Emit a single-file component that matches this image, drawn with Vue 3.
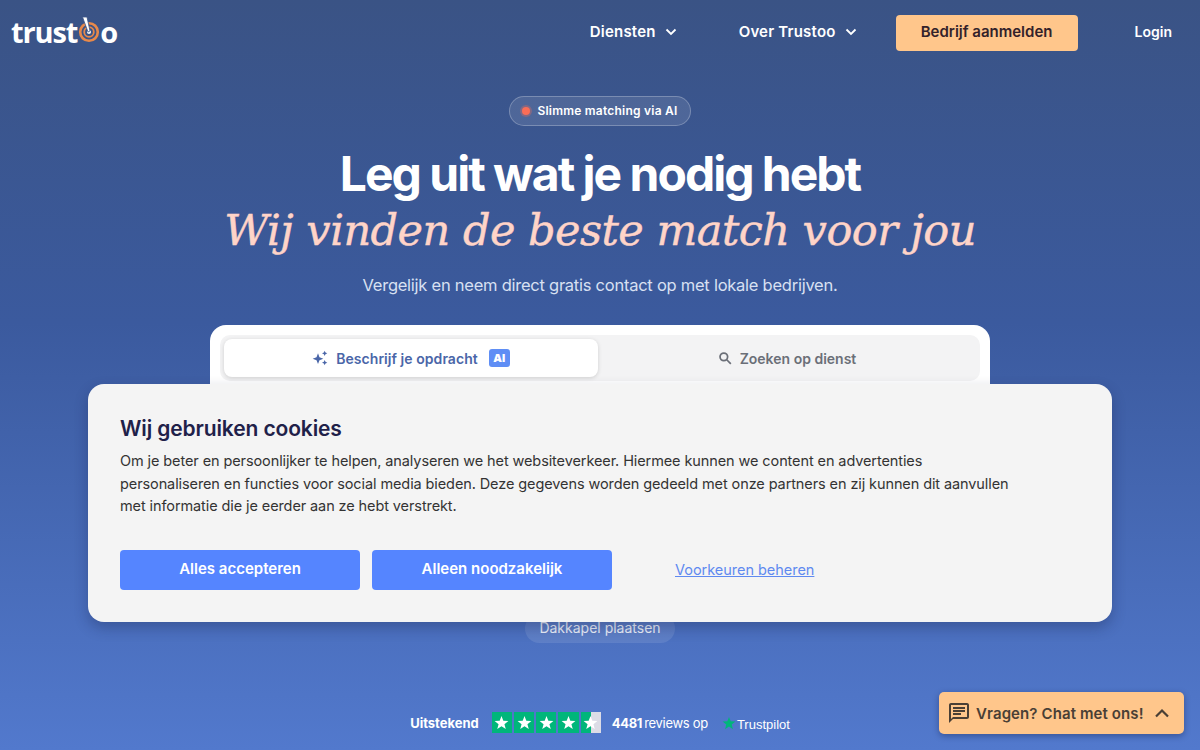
<script setup>
const stars = [1, 2, 3, 4, 5]
</script>

<template>
  <div class="page">
    <header class="nav">
      <div class="logo">
        <span>trust</span>
        <svg class="target" width="24" height="28" viewBox="0 0 24 28">
          <circle cx="12" cy="16" r="8.800" fill="none" stroke="#e8894a" stroke-width="2.600" />
          <circle cx="12" cy="16" r="4.800" fill="none" stroke="#e8894a" stroke-width="1.800" />
          <circle cx="12" cy="16" r="2" fill="#f4f4f4" />
          <path d="M5.500 1 L10 1 L13 15 L11 16 Z" fill="#fff" stroke="#3a5385" stroke-width="0.800" />
        </svg>
        <span>o</span>
      </div>
      <nav class="menu">
        <a class="item first">Diensten
          <svg width="12" height="8" viewBox="0 0 12 8"><path d="M1.500 1.500 6 6l4.500-4.500" fill="none" stroke="#fff" stroke-width="1.800" /></svg>
        </a>
        <a class="item second">Over Trustoo
          <svg width="12" height="8" viewBox="0 0 12 8"><path d="M1.500 1.500 6 6l4.500-4.500" fill="none" stroke="#fff" stroke-width="1.800" /></svg>
        </a>
        <a class="cta">Bedrijf aanmelden</a>
        <a class="login">Login</a>
      </nav>
    </header>

    <main class="hero">
      <div class="badge"><i class="dot"></i>Slimme matching via AI</div>
      <h1>Leg uit wat je nodig hebt</h1>
      <h2>Wij vinden de beste match voor jou</h2>
      <p class="sub">Vergelijk en neem direct gratis contact op met lokale bedrijven.</p>

      <section class="card">
        <div class="tabs">
          <div class="tab active">
            <svg width="16" height="16" viewBox="0 0 24 24" fill="#4a66a8">
              <path d="M9 5l2.200 5.800L17 13l-5.800 2.200L9 21l-2.200-5.800L1 13l5.800-2.200z" />
              <path d="M19 1l1.200 2.800L23 5l-2.800 1.200L19 9l-1.200-2.800L15 5l2.800-1.200zM19 15l1.200 2.800L23 19l-2.800 1.200L19 23l-1.200-2.800L15 19l2.800-1.200z" />
            </svg>
            <span>Beschrijf je opdracht</span>
            <b class="ai">AI</b>
          </div>
          <div class="tab">
            <svg width="14" height="14" viewBox="0 0 24 24" fill="none" stroke="#6b6f78" stroke-width="3">
              <circle cx="10" cy="10" r="6.500" /><path d="M15 15l7 7" />
            </svg>
            <span>Zoeken op dienst</span>
          </div>
        </div>
        <div class="card-body"></div>
      </section>

      <div class="chip">Dakkapel plaatsen</div>

      <div class="trust">
        <b class="lbl">Uitstekend</b>
        <div class="stars">
          <span v-for="s in stars" :key="s" class="star" :class="{ half: s === 5 }">
            <svg width="15" height="15" viewBox="0 0 24 24"><path d="M12 1.500l2.900 7.600 8.100.4-6.300 5.100 2.100 7.900L12 18.100l-6.800 4.400 2.100-7.900L1 9.500l8.100-.4z" fill="#fff" /></svg>
          </span>
        </div>
        <span class="count"><b>4481</b>reviews op</span>
        <span class="pilot">
          <svg width="14" height="14" viewBox="0 0 24 24"><path d="M12 1.500l2.900 7.600 8.100.4-6.300 5.100 2.100 7.900L12 18.100l-6.800 4.400 2.100-7.900L1 9.500l8.100-.4z" fill="#00b67a" /></svg>
          <span class="pilot-name">Trustpilot</span>
        </span>
      </div>
    </main>

    <aside class="cookie">
      <h3>Wij gebruiken cookies</h3>
      <p>Om je beter en persoonlijker te helpen, analyseren we het websiteverkeer. Hiermee kunnen we content en advertenties personaliseren en functies voor social media bieden. Deze gegevens worden gedeeld met onze partners en zij kunnen dit aanvullen met informatie die je eerder aan ze hebt verstrekt.</p>
      <div class="actions">
        <button class="btn">Alles accepteren</button>
        <button class="btn">Alleen noodzakelijk</button>
        <a class="pref">Voorkeuren beheren</a>
      </div>
    </aside>

    <aside class="chat">
      <svg width="24" height="24" viewBox="0 0 24 24" fill="#4a3f35">
        <path d="M20 2H4c-1.100 0-2 .9-2 2v18l4-4h14c1.100 0 2-.9 2-2V4c0-1.100-.9-2-2-2zm0 14H6l-2 2V4h16v12zM6 12h8v2H6zm0-3h12v2H6zm0-3h12v2H6z" />
      </svg>
      <span>Vragen? Chat met ons!</span>
      <svg class="up" width="16" height="10" viewBox="0 0 16 10"><path d="M2 8.500l6-6 6 6" fill="none" stroke="#4a3f35" stroke-width="2.200" /></svg>
    </aside>
  </div>
</template>

<style>
html, body { margin: 0; overflow: hidden; }
</style>

<style scoped>
.page {
  width: 1200px;
  height: 750px;
  overflow: hidden;
  position: relative;
  font-family: Inter, "Liberation Sans", sans-serif;
  color: #fff;
  background: linear-gradient(180deg, #3a5385 0%, #3b5a9e 43%, #5279cd 100%);
}
.nav {
  height: 65px;
  display: flex;
  align-items: center;
  justify-content: space-between;
  padding: 0 28px 0 11px;
}
.logo {
  display: flex;
  align-items: flex-end;
  margin-top: -2px;
  font-family: "Open Sans", sans-serif;
  font-weight: 700;
  font-size: 29px;
  line-height: 30px;
  letter-spacing: -1.100px;
}
.target { margin: 0 -1px 3px 0; }
.menu { display: flex; align-items: center; }
.item {
  display: flex;
  align-items: center;
  gap: 9px;
  padding-bottom: 2px;
  font-size: 15px;
  font-weight: 600;
  letter-spacing: 0.200px;
}
.item.first { margin-right: 62px; }
.item.second { margin-right: 39px; }
.cta {
  width: 182px;
  height: 36px;
  box-sizing: border-box;
  padding-bottom: 2px;
  display: flex;
  align-items: center;
  justify-content: center;
  background: #ffc68b;
  color: #33222a;
  border-radius: 4px;
  font-size: 15px;
  font-weight: 600;
  margin-right: 57px;
}
.login { font-size: 14px; font-weight: 600; padding-bottom: 2px; }
.hero {
  display: flex;
  flex-direction: column;
  align-items: center;
  padding-top: 31px;
}
.badge {
  padding: 0 12px 2px 11px;
  height: 26px;
  display: flex;
  align-items: center;
  gap: 7px;
  border: 1px solid rgba(255, 255, 255, 0.25);
  background: rgba(255, 255, 255, 0.1);
  border-radius: 15px;
  font-size: 12px;
  font-weight: 600;
  letter-spacing: 0.230px;
}
.dot {
  width: 8px;
  height: 8px;
  margin: 2px 0 0 1px;
  border-radius: 50%;
  background: #fa6d57;
  box-shadow: 0 0 0 2px rgba(250, 109, 87, 0.3);
}
h1 {
  margin: 18px 0 0;
  font-size: 48px;
  line-height: 60px;
  font-weight: 700;
  letter-spacing: -2px;
}
h2 {
  margin: -4px 0 0;
  font-family: "DejaVu Serif", serif;
  font-style: italic;
  font-weight: 400;
  font-size: 43px;
  line-height: 60px;
  letter-spacing: -0.500px;
  -webkit-text-stroke: 0.500px #ffd4c8;
  color: #ffd4c8;
}
.sub {
  margin: 12px 0 0;
  font-size: 16.500px;
  line-height: 26px;
  color: #d8e0f2;
  letter-spacing: -0.250px;
}
.card {
  margin-top: 27px;
  width: 780px;
  height: 280px;
  box-sizing: border-box;
  padding: 10px;
  background: #fff;
  border-radius: 16px;
}
.tabs {
  display: grid;
  grid-template-columns: 374px 1fr;
  height: 46px;
  padding: 4px;
  box-sizing: border-box;
  background: #f3f3f4;
  border-radius: 10px;
}
.tab {
  display: flex;
  align-items: center;
  justify-content: center;
  gap: 8px;
  font-size: 14px;
  font-weight: 600;
  color: #6b6f78;
  border-radius: 8px;
}
.tab.active {
  background: #fff;
  color: #4a66a8;
  letter-spacing: 0.050px;
  box-shadow: 0 1px 4px rgba(0, 0, 0, 0.15);
}
.ai {
  width: 21px;
  height: 18px;
  border-radius: 3px;
  background: #5f8ef5;
  color: #fff;
  font-size: 11px;
  display: flex;
  align-items: center;
  justify-content: center;
  margin-left: 3px;
}
.chip {
  margin-top: 9px;
  height: 27px;
  padding: 0 14px 2px;
  display: flex;
  align-items: center;
  border-radius: 15px;
  background: rgba(255, 255, 255, 0.1);
  font-size: 14px;
  color: #eef2fb;
}
.trust {
  margin-top: 69px;
  display: flex;
  align-items: center;
  font-size: 13px;
}
.lbl { font-weight: 700; margin-right: 13px; }
.stars { display: flex; gap: 2px; margin-right: 11px; }
.star {
  width: 20.200px;
  height: 21px;
  background: #00b67a;
  display: flex;
  align-items: center;
  justify-content: center;
}
.star.half { background: linear-gradient(90deg, #00b67a 50%, #dcdce6 50%); }
.count b { font-weight: 700; margin-right: 2px; }
.count { letter-spacing: -0.300px; margin-right: 14px; }
.pilot { display: flex; align-items: center; gap: 1px; font-size: 13px; font-family: "Liberation Sans", sans-serif; }
.pilot-name { margin-top: 3px; }
.cookie {
  position: absolute;
  left: 88px;
  top: 384px;
  width: 1024px;
  height: 238px;
  box-sizing: border-box;
  padding: 30px 32px;
  background: #f4f4f4;
  border-radius: 16px;
  box-shadow: 0 6px 14px rgba(20, 30, 70, 0.3);
  color: #333;
}
h3 {
  margin: 0;
  font-size: 21px;
  line-height: 30px;
  font-weight: 600;
  letter-spacing: -0.120px;
  color: #1f2149;
}
.cookie p {
  margin: 6px 0 0;
  width: 900px;
  font-size: 14.500px;
  line-height: 22.500px;
  letter-spacing: -0.100px;
}
.actions {
  margin-top: 32px;
  display: flex;
  align-items: center;
  gap: 12px;
}
.btn {
  width: 240px;
  height: 40px;
  border: 0;
  padding: 0 0 2px;
  border-radius: 4px;
  background: #5585ff;
  color: #fff;
  font-family: inherit;
  font-size: 15px;
  font-weight: 600;
}
.pref {
  margin-left: 51px;
  color: #5f8af0;
  font-size: 14.500px;
  letter-spacing: -0.030px;
  text-decoration: underline;
}
.chat {
  position: absolute;
  left: 939px;
  top: 692px;
  width: 245px;
  height: 42px;
  box-sizing: border-box;
  padding: 0 14px 0 8px;
  display: flex;
  align-items: center;
  gap: 5px;
  background: #ffc68b;
  border-radius: 5px;
  box-shadow: 0 2px 6px rgba(20, 30, 70, 0.4);
  color: #4a3f35;
  font-size: 15px;
  font-weight: 600;
  letter-spacing: 0.100px;
}
.up { margin-left: auto; }
</style>
